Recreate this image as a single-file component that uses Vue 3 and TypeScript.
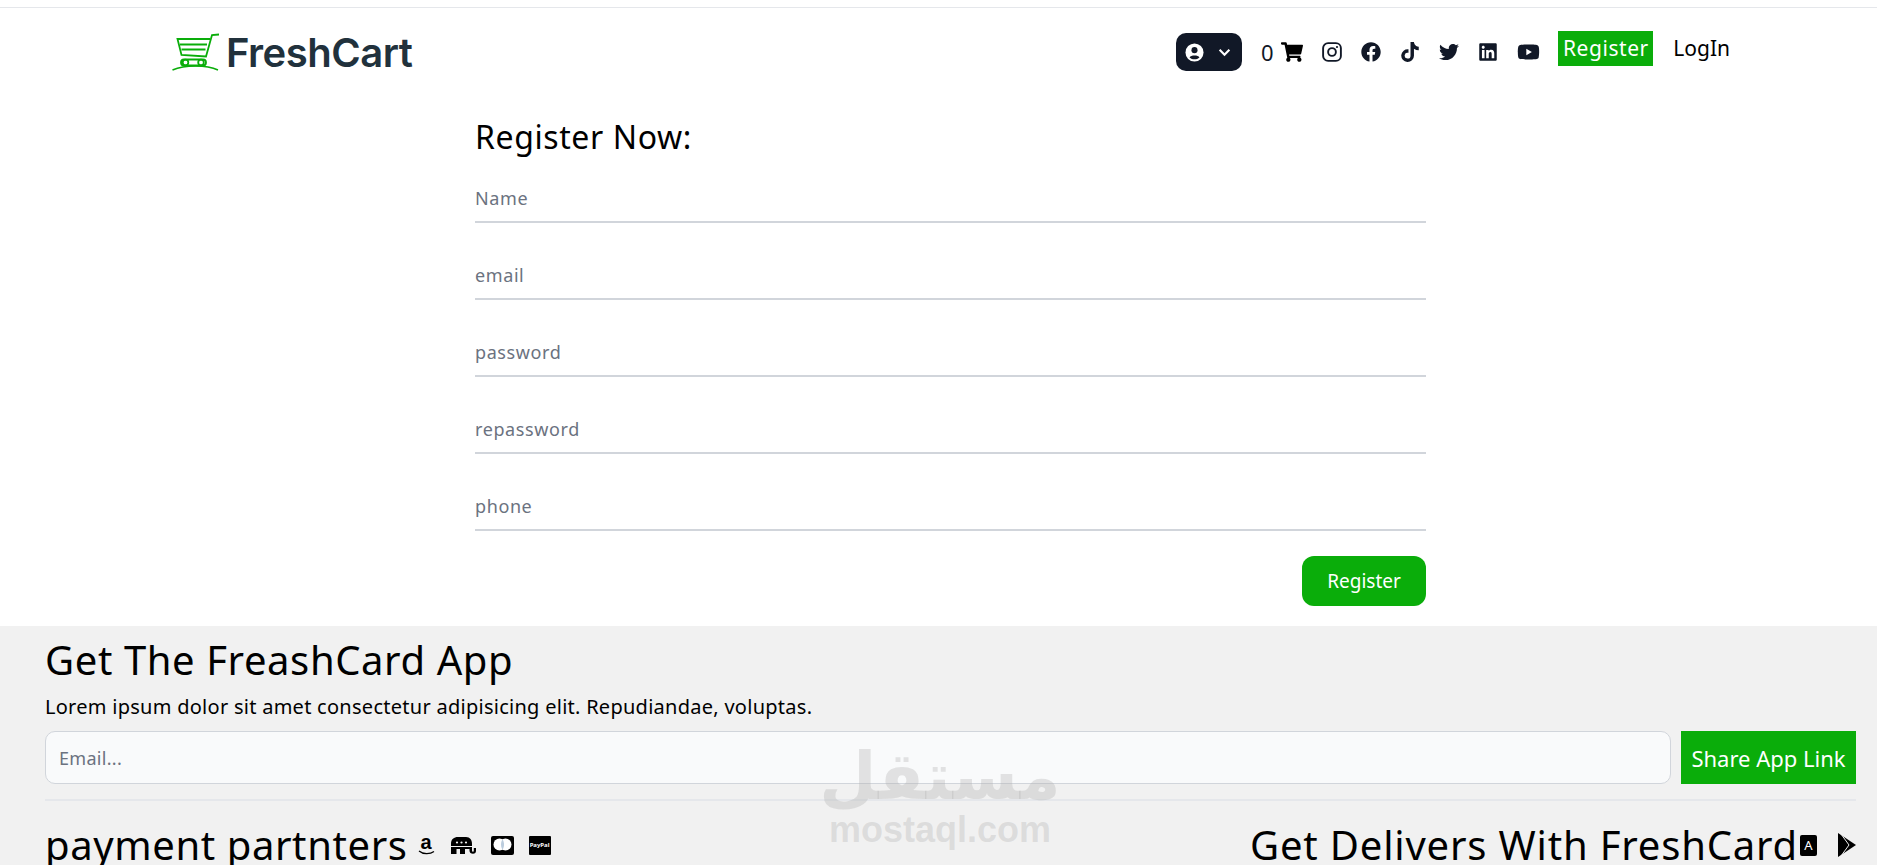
<script setup lang="ts">
const fields = ["Name", "email", "password", "repassword", "phone"];
</script>

<template>
  <div class="page">
    <nav class="navbar">
      <div class="brand">
        <svg class="logo-cart" viewBox="0 0 48 38" fill="none" stroke="#0aad0a" stroke-width="1.8">
          <path d="M47 1.500 40 2 34 23.500 9.500 22 5.500 6H38" />
          <path d="M8 11.500h27M9.500 16.500h24" />
          <path d="M0.500 37c7-3 14-4 23-4s16 1 22.500 4" stroke-width="1.5" />
          <rect x="9" y="26.500" width="25" height="6" rx="3" />
          <circle cx="13.500" cy="29.500" r="2.800" />
          <circle cx="29" cy="29.500" r="2.800" />
        </svg>
        <span class="brand-name">FreshCart</span>
      </div>

      <div class="nav-right">
        <button class="user-btn" type="button">
          <svg viewBox="0 0 20 20" class="user-icon">
            <circle cx="10" cy="10" r="9.500" fill="#fff" />
            <circle cx="10" cy="7.500" r="3.200" fill="#111827" />
            <path d="M4.800 15.200c1.500-2.600 9-2.600 10.400 0-2.800 2.600-7.600 2.600-10.400 0z" fill="#111827" />
          </svg>
          <svg viewBox="0 0 12 8" class="chevron" fill="none" stroke="#fff" stroke-width="2">
            <path d="M1.500 1.500 6 6l4.500-4.500" />
          </svg>
        </button>
        <span class="count">0</span>
        <svg class="cart" viewBox="0 0 576 512">
          <path d="M528.12 301.319l47.273-208C578.806 78.301 567.391 64 551.99 64H159.208l-9.166-44.81C147.758 8.021 137.93 0 126.529 0H24C10.745 0 0 10.745 0 24v16c0 13.255 10.745 24 24 24h69.883l70.248 343.435C147.325 417.1 136 435.222 136 456c0 30.928 25.072 56 56 56s56-25.072 56-56c0-15.674-6.447-29.835-16.824-40h209.647C430.447 426.165 424 440.326 424 456c0 30.928 25.072 56 56 56s56-25.072 56-56c0-22.172-12.888-41.332-31.579-50.405l5.517-24.276c3.413-15.018-8.002-29.319-23.403-29.319H218.117l-6.545-32h293.145c11.206 0 20.92-7.754 23.403-18.681z" />
        </svg>
        <div class="socials">
          <svg viewBox="0 0 18 18" class="soc">
            <rect x="1" y="1" width="16" height="16" rx="4.500" fill="none" stroke="#111827" stroke-width="1.700" />
            <circle cx="9" cy="9" r="3.500" fill="none" stroke="#111827" stroke-width="1.700" />
            <circle cx="13.500" cy="4.500" r="1" />
          </svg>
          <svg viewBox="0 0 512 512" class="soc">
            <path d="M504 256C504 119 393 8 256 8S8 119 8 256c0 123.78 90.69 226.38 209.25 245V327.69h-63V256h63v-54.64c0-62.15 37-96.48 93.67-96.48 27.14 0 55.52 4.84 55.52 4.84v61h-31.28c-30.8 0-40.41 19.12-40.41 38.73V256h68.78l-11 71.69h-57.78V501C413.31 482.38 504 379.78 504 256z" />
          </svg>
          <svg viewBox="0 0 448 512" class="soc">
            <path d="M448,209.91a210.06,210.06,0,0,1-122.77-39.25V349.38A162.55,162.55,0,1,1,185,188.31V278.2a74.62,74.62,0,1,0,52.23,71.18V0l88,0a121.18,121.18,0,0,0,1.86,22.17h0A122.18,122.18,0,0,0,381,102.39a121.43,121.43,0,0,0,67,20.14Z" />
          </svg>
          <svg viewBox="0 0 512 512" class="soc">
            <path d="M459.37 151.716c.325 4.548.325 9.097.325 13.645 0 138.72-105.583 298.558-298.558 298.558-59.452 0-114.68-17.219-161.137-47.106 8.447.974 16.568 1.299 25.34 1.299 49.055 0 94.213-16.568 130.274-44.832-46.132-.975-84.792-31.188-98.112-72.772 6.498.974 12.995 1.624 19.818 1.624 9.421 0 18.843-1.3 27.614-3.573-48.081-9.747-84.143-51.98-84.143-102.985v-1.299c13.969 7.797 30.214 12.67 47.431 13.319-28.264-18.843-46.781-51.005-46.781-87.391 0-19.492 5.197-37.36 14.294-52.954 51.655 63.675 129.3 105.258 216.365 109.807-1.624-7.797-2.599-15.918-2.599-24.04 0-57.828 46.782-104.934 104.934-104.934 30.213 0 57.502 12.67 76.67 33.137 23.715-4.548 46.456-13.32 66.599-25.34-7.798 24.366-24.366 44.833-46.132 57.827 21.117-2.273 41.584-8.122 60.426-16.243-14.292 20.791-32.161 39.308-52.628 54.253z" />
          </svg>
          <svg viewBox="0 0 448 512" class="soc">
            <path d="M416 32H31.9C14.3 32 0 46.5 0 64.3v383.4C0 465.5 14.3 480 31.9 480H416c17.6 0 32-14.5 32-32.3V64.3c0-17.8-14.4-32.3-32-32.3zM135.4 416H69V202.2h66.5V416zm-33.2-243c-21.3 0-38.5-17.3-38.5-38.5S80.9 96 102.2 96c21.2 0 38.5 17.3 38.5 38.5 0 21.3-17.2 38.5-38.5 38.5zm282.1 243h-66.4V312c0-24.8-.5-56.7-34.5-56.7-34.6 0-39.9 27-39.9 54.9V416h-66.4V202.2h63.7v29.2h.9c8.9-16.8 30.6-34.5 62.9-34.5 67.2 0 79.7 44.3 79.7 101.9V416z" />
          </svg>
          <svg viewBox="0 0 576 512" class="soc yt">
            <path d="M549.655 124.083c-6.281-23.65-24.787-42.276-48.284-48.597C458.781 64 288 64 288 64S117.22 64 74.629 75.486c-23.497 6.322-42.003 24.947-48.284 48.597-11.412 42.867-11.412 132.305-11.412 132.305s0 89.438 11.412 132.305c6.281 23.65 24.787 41.5 48.284 47.821C117.22 448 288 448 288 448s170.78 0 213.371-11.486c23.497-6.321 42.003-24.171 48.284-47.821 11.412-42.867 11.412-132.305 11.412-132.305s0-89.438-11.412-132.305zm-317.51 213.508V175.185l142.739 81.205-142.739 81.201z" />
          </svg>
        </div>
        <a class="nav-register">Register</a>
        <a class="nav-login">LogIn</a>
      </div>
    </nav>

    <main class="register">
      <h2 class="register-title">Register Now:</h2>
      <form class="register-form" @submit.prevent>
        <input v-for="f in fields" :key="f" class="field" type="text" :placeholder="f" />
        <div class="actions">
          <button class="submit" type="submit">Register</button>
        </div>
      </form>
    </main>

    <footer class="footer">
      <h2 class="footer-title">Get The FreashCard App</h2>
      <p class="footer-text">Lorem ipsum dolor sit amet consectetur adipisicing elit. Repudiandae, voluptas.</p>
      <div class="share">
        <input class="share-input" type="text" placeholder="Email..." />
        <button class="share-btn" type="button">Share App Link</button>
      </div>
      <hr class="divider" />
      <div class="bottom">
        <div class="bottom-group">
          <h3 class="bottom-title">payment partnters</h3>
          <div class="pay-icons">
            <span class="amazon">a<svg viewBox="0 0 17 6" fill="none" stroke="#000" stroke-width="1.200"><path d="M1 1c4 3.500 11 3.500 15 .5" /></svg></span>
            <svg class="elephant" viewBox="0 0 26 19">
              <path d="M1 8C1 3 4 1 8 1h8c4 0 6 3 6 7v6.500c0 1 .6 1.300 1 1.300s.8-.4.8-1.300V12H26v2.800c0 2-1 3-3 3s-3.500-1-3.500-3V13H15v5h-5v-5H6.500v5H1z" />
              <circle cx="7" cy="6.500" r="1.100" fill="#f1f1f1" />
              <circle cx="11.500" cy="6.500" r="1.100" fill="#f1f1f1" />
              <circle cx="16" cy="6.500" r="1.100" fill="#f1f1f1" />
              <rect x="0" y="10" width="22" height="1" fill="#f1f1f1" />
            </svg>
            <svg class="card" viewBox="0 0 23 19">
              <rect width="23" height="19" rx="2" />
              <circle cx="8.500" cy="8.500" r="6" fill="#fff" />
              <circle cx="14.500" cy="8.500" r="6" fill="#fff" />
              <path d="M11.500 3.500c-2 2.500-2 7.500 0 10 2-2.500 2-7.500 0-10z" fill="#bcd" />
            </svg>
            <span class="paypal">PayPal</span>
          </div>
        </div>
        <div class="bottom-group">
          <h3 class="bottom-title delivers">Get Delivers With FreshCard</h3>
          <div class="app-icons">
            <span class="appstore">A</span>
            <svg class="play" viewBox="0 0 18 24">
              <path d="M0 0l18 12L0 24z" />
              <path d="M3 1l8 11-8 11" fill="none" stroke="#f1f1f1" stroke-width="1" />
            </svg>
          </div>
        </div>
      </div>
    </footer>

    <div class="watermark">
      <span class="wm-ar">مستقل</span>
      <span class="wm-en">mostaql.com</span>
    </div>
  </div>
</template>

<style>
html,
body {
  margin: 0;
  overflow: hidden;
  background: #fff;
}
</style>

<style scoped>
.page {
  position: relative;
  height: 865px;
  overflow: hidden;
  font-family: "Noto Sans", "Open Sans", sans-serif;
  color: #000;
}

.navbar {
  margin-top: 7px;
  border-top: 1px solid #e5e7eb;
  height: 89px;
  display: flex;
  justify-content: space-between;
  align-items: center;
  padding: 0 147px 0 172px;
  box-sizing: border-box;
}

.brand {
  display: flex;
  align-items: center;
  gap: 6px;
}

.logo-cart {
  width: 48px;
  height: 38px;
}

.brand-name {
  font-family: Inter, sans-serif;
  font-weight: 600;
  font-size: 40px;
  letter-spacing: -0.5px;
  color: #21313c;
}

.nav-right {
  display: flex;
  align-items: center;
}

.user-btn {
  width: 66px;
  height: 38px;
  border: none;
  border-radius: 10px;
  background: #111827;
  display: flex;
  align-items: center;
  padding: 0 9px;
  gap: 14px;
  box-sizing: border-box;
}

.user-icon {
  width: 19px;
  height: 19px;
}

.chevron {
  width: 13px;
  height: 9px;
}

.count {
  margin-left: 19px;
  font-size: 22px;
  color: #111827;
}

.cart {
  width: 22px;
  height: 20px;
  margin-left: 8px;
  margin-top: -1px;
}

.socials {
  display: flex;
  align-items: center;
  gap: 19px;
  margin-left: 19px;
}

.soc {
  width: 20px;
  height: 20px;
  fill: #111827;
}

.yt {
  width: 23px;
}

.nav-register {
  margin-left: 18px;
  padding: 0 4.5px;
  height: 35px;
  line-height: 35px;
  background: #0aad0a;
  color: #fff;
  font-size: 21px;
  letter-spacing: 0.55px;
  margin-top: -8px;
}

.nav-login {
  margin-left: 20px;
  font-size: 21px;
  margin-top: -8px;
}

.register {
  margin-left: 475px;
  width: 951px;
}

.register-title {
  margin: 23px 0 0;
  font-size: 32px;
  font-weight: 400;
  line-height: 36px;
  letter-spacing: 0.6px;
}

.register-form {
  display: flex;
  flex-direction: column;
  margin-top: 20px;
}

.field {
  box-sizing: border-box;
  height: 48px;
  margin-top: 29px;
  padding: 0;
  border: none;
  border-bottom: 2px solid #d1d5db;
  outline: none;
  font-family: inherit;
  font-size: 18px;
  letter-spacing: 0.6px;
  background: transparent;
}

.field:first-child {
  margin-top: 0;
}

.field::placeholder {
  color: #6b7280;
  opacity: 1;
}

.actions {
  display: flex;
  justify-content: flex-end;
  margin-top: 25px;
}

.submit {
  width: 124px;
  height: 50px;
  border: none;
  border-radius: 12px;
  background: #0aad0a;
  color: #fff;
  font-family: inherit;
  font-size: 19px;
}

.footer {
  margin-top: 20px;
  padding: 14px 21px 0 45px;
  background: #f1f1f1;
  height: 240px;
}

.footer-title {
  margin: 0;
  font-size: 40px;
  font-weight: 400;
  line-height: 40px;
  letter-spacing: 0.6px;
}

.footer-text {
  margin: 13px 0 0;
  font-size: 20px;
  line-height: 28px;
  letter-spacing: 0.27px;
}

.share {
  display: flex;
  gap: 10px;
  margin-top: 10px;
}

.share-input {
  flex: 1;
  height: 53px;
  box-sizing: border-box;
  padding: 0 13px;
  border: 1px solid #d1d5db;
  border-radius: 10px;
  background: #f9fafb;
  font-family: inherit;
  font-size: 18px;
  letter-spacing: 0.3px;
  outline: none;
}

.share-input::placeholder {
  color: #6b7280;
  opacity: 1;
}

.share-btn {
  width: 175px;
  height: 53px;
  border: none;
  background: #0aad0a;
  color: #fff;
  font-family: inherit;
  font-size: 22px;
  padding: 0;
}

.divider {
  margin: 15px 0 0;
  border: none;
  border-top: 2px solid #e5e7eb;
}

.bottom {
  display: flex;
  justify-content: space-between;
  margin-top: 20px;
}

.bottom-group {
  display: flex;
  align-items: center;
}

.bottom-title {
  margin: 0;
  font-size: 40px;
  font-weight: 400;
  line-height: 48px;
  letter-spacing: 0.6px;
}

.delivers {
  letter-spacing: 0.82px;
}

.pay-icons {
  display: flex;
  align-items: center;
  gap: 15px;
  margin-left: 10px;
}

.amazon {
  position: relative;
  width: 17px;
  height: 24px;
  font-family: "Liberation Sans", sans-serif;
  font-weight: 700;
  font-size: 20px;
  line-height: 18px;
  text-align: center;
}

.amazon svg {
  position: absolute;
  left: 0;
  bottom: 1px;
  width: 17px;
  height: 6px;
}

.elephant {
  width: 26px;
  height: 19px;
}

.card {
  width: 23px;
  height: 19px;
}

.paypal {
  width: 22px;
  height: 19px;
  background: #000;
  color: #fff;
  font-size: 6px;
  font-weight: 700;
  line-height: 19px;
  text-align: center;
  border-radius: 1px;
}

.app-icons {
  display: flex;
  align-items: center;
  gap: 21px;
  margin-left: 2px;
}

.appstore {
  width: 17px;
  height: 21px;
  border-radius: 2px;
  background: #000;
  color: #fff;
  font-size: 13px;
  line-height: 21px;
  text-align: center;
}

.play {
  width: 18px;
  height: 24px;
}

/* watermark sits over the footer */
.watermark {
  position: absolute;
  left: 790px;
  top: 742px;
  width: 300px;
  display: flex;
  flex-direction: column;
  align-items: center;
  pointer-events: none;
  color: rgba(175, 175, 175, 0.32);
}

.wm-ar {
  font-family: "DejaVu Sans", sans-serif;
  font-weight: 700;
  font-size: 66px;
  line-height: 70px;
}

.wm-en {
  font-family: "Liberation Sans", sans-serif;
  font-weight: 700;
  font-size: 36px;
  line-height: 36px;
}
</style>
